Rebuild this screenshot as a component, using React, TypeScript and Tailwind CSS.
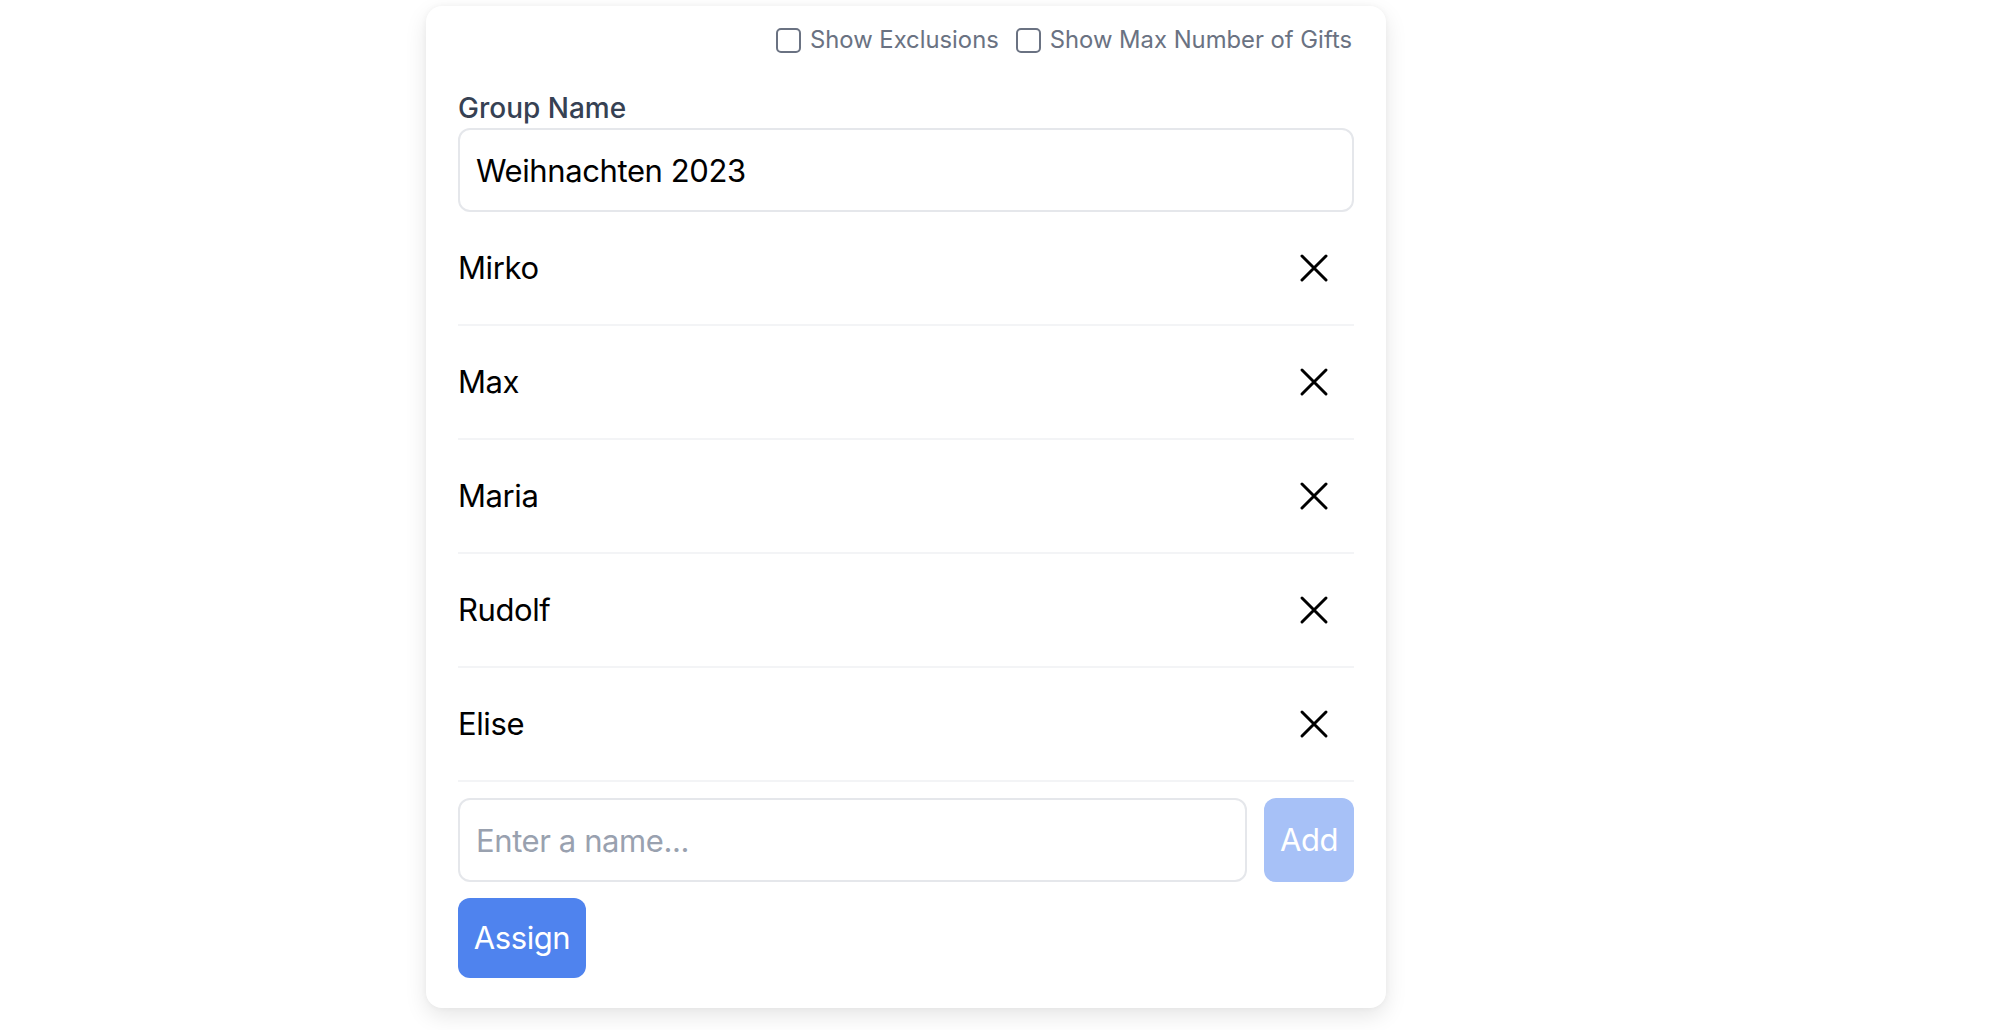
import { useState } from "react";

const people = ["Mirko", "Max", "Maria", "Rudolf", "Elise"];

function XIcon() {
  return (
    <svg viewBox="0 0 24 24" fill="none" stroke="currentColor" strokeWidth={1.5} className="w-[48px] h-[48px]">
      <path strokeLinecap="round" strokeLinejoin="round" d="M6 18 18 6M6 6l12 12" />
    </svg>
  );
}

function Check({ label }: { label: string }) {
  return (
    <label className="flex items-center gap-[9px]">
      <span className="w-[25px] h-[25px] rounded-[5px] border-2 border-gray-500 bg-white" />
      <span>{label}</span>
    </label>
  );
}

export default function App() {
  const [group, setGroup] = useState("Weihnachten 2023");
  const [name, setName] = useState("");
  const [list, setList] = useState(people);

  return (
    <div className="min-h-screen bg-white pl-[426px] pt-[6px] font-['Inter',sans-serif]">
      <div className="w-[960px] rounded-2xl bg-white shadow-[0_8px_22px_rgba(0,0,0,0.1),0_0_6px_rgba(0,0,0,0.04)] px-8 pt-[18px] pb-[30px]">
        <div className="flex justify-end items-center gap-[17px] h-[32px] text-[23.8px] text-gray-500 pr-[2px]">
          <Check label="Show Exclusions" />
          <Check label="Show Max Number of Gifts" />
        </div>

        <div className="mt-8 h-[40px] leading-[40px] text-[28px] font-medium text-gray-700">Group Name</div>
        <input
          value={group}
          onChange={(e) => setGroup(e.target.value)}
          className="w-full h-[84px] border-2 border-gray-200 rounded-[12px] px-4 text-[31px] tracking-[-0.4px] text-black outline-none"
        />

        <div>
          {list.map((p) => (
            <div key={p} className="h-[114px] flex items-center justify-between border-b-2 border-gray-100">
              <span className="text-[31px] tracking-[-0.4px] text-black">{p}</span>
              <button
                type="button"
                onClick={() => setList((xs) => xs.filter((x) => x !== p))}
                className="mr-[16px] text-black"
              >
                <XIcon />
              </button>
            </div>
          ))}
        </div>

        <div className="mt-[16px] flex gap-[17px]">
          <input
            value={name}
            onChange={(e) => setName(e.target.value)}
            placeholder="Enter a name..."
            className="flex-1 h-[84px] border-2 border-gray-200 rounded-[12px] px-4 text-[31px] tracking-[-0.4px] text-black placeholder:text-gray-400 outline-none"
          />
          <button
            type="button"
            disabled={!name.trim()}
            className="w-[90px] h-[84px] rounded-[12px] bg-[#a7c1f7] text-white text-[31px] tracking-[-0.4px]"
          >
            Add
          </button>
        </div>

        <button type="button" className="mt-[16px] w-[128px] h-[80px] rounded-[12px] bg-[#4f83ee] text-white text-[31px] tracking-[-0.4px]">
          Assign
        </button>
      </div>
    </div>
  );
}
